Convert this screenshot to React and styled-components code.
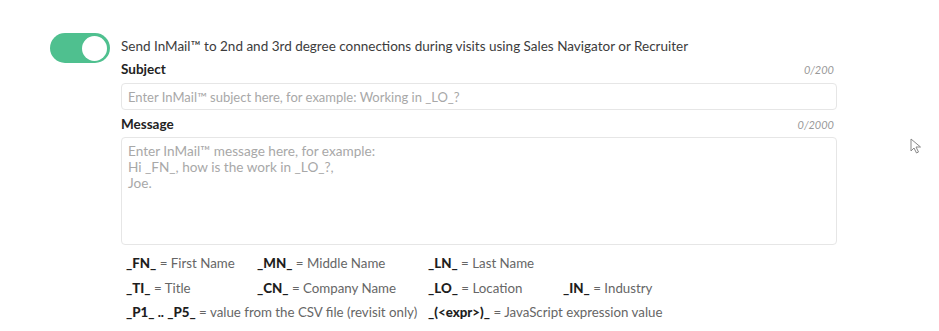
import React from "react";
import styled, { createGlobalStyle } from "styled-components";

const Global = createGlobalStyle`
  html, body { margin: 0; padding: 0; background: #ffffff; }
  body { font-family: "Lato", "Noto Sans", sans-serif; }
`;

const Page = styled.div`
  position: relative;
  width: 939px;
  height: 331px;
  overflow: hidden;
  box-sizing: border-box;
  padding: 33px 0 0 50px;
  display: flex;
  gap: 11px;
  align-items: flex-start;
`;

const Toggle = styled.div`
  flex: none;
  width: 60px;
  height: 30px;
  border-radius: 15px;
  background: ${(p) => (p.$on ? "#4fc08f" : "#cfcfcf")};
  display: flex;
  align-items: center;
  justify-content: ${(p) => (p.$on ? "flex-end" : "flex-start")};
  padding: 0 3px;
  box-sizing: border-box;
`;

const Knob = styled.div`
  width: 25px;
  height: 25px;
  border-radius: 50%;
  background: #ffffff;
`;

const Content = styled.div`
  width: 716px;
  padding-top: 4px;
  display: flex;
  flex-direction: column;
`;

const Intro = styled.div`
  font-size: 13.5px;
  line-height: 18px;
  color: #3c3c3c;
  white-space: nowrap;
`;

const FieldHead = styled.div`
  display: flex;
  justify-content: space-between;
  align-items: baseline;
  height: 20px;
  margin-top: ${(p) => p.$mt}px;
  margin-bottom: ${(p) => p.$mb}px;
  padding-right: 3px;
`;

const Label = styled.span`
  font-size: 13.5px;
  font-weight: 700;
  color: #222;
  line-height: 20px;
`;

const Counter = styled.span`
  font-size: 11px;
  font-style: italic;
  color: #999;
`;

const Input = styled.input`
  box-sizing: border-box;
  width: 716px;
  height: 27px;
  border: 1px solid #e6e6e6;
  border-radius: 4px;
  padding: 0 6px;
  font-family: inherit;
  font-size: 13px;
  color: #333;
  outline: none;
  &::placeholder { color: #a8a8a8; }
`;

const TextArea = styled.textarea`
  box-sizing: border-box;
  width: 716px;
  height: 108px;
  border: 1px solid #e6e6e6;
  border-radius: 4px;
  padding: 5px 6px;
  font-family: inherit;
  font-size: 13.6px;
  line-height: 16px;
  color: #333;
  resize: none;
  outline: none;
  &::placeholder { color: #a8a8a8; }
`;

const Legend = styled.div`
  margin-top: 6px;
  padding-left: 5px;
  display: grid;
  grid-template-columns: 131px 171px 135px auto;
  grid-auto-rows: 24.5px;
  align-items: center;
  font-size: 13.3px;
  white-space: nowrap;
`;

const Item = styled.div`
  grid-column: ${(p) => (p.$span ? `span ${p.$span}` : "auto")};
  color: #666;
`;

const Key = styled.b`
  color: #1e1e1e;
  font-weight: 900;
`;

const Cursor = styled.svg`
  position: absolute;
  left: 910px;
  top: 138px;
`;

const legend = [
  [["_FN_", "First Name"], ["_MN_", "Middle Name"], ["_LN_", "Last Name"], null],
  [["_TI_", "Title"], ["_CN_", "Company Name"], ["_LO_", "Location"], ["_IN_", "Industry"]],
];

export default function App() {
  return (
    <>
      <Global />
      <Page>
        <Toggle $on>
          <Knob />
        </Toggle>
        <Content>
          <Intro>
            Send InMail™ to 2nd and 3rd degree connections during visits using Sales Navigator or Recruiter
          </Intro>
          <FieldHead $mt={4} $mb={4}>
            <Label>Subject</Label>
            <Counter>0/200</Counter>
          </FieldHead>
          <Input placeholder="Enter InMail™ subject here, for example: Working in _LO_?" />
          <FieldHead $mt={4} $mb={3}>
            <Label>Message</Label>
            <Counter>0/2000</Counter>
          </FieldHead>
          <TextArea placeholder={"Enter InMail™ message here, for example:\nHi _FN_, how is the work in _LO_?,\nJoe."} />
          <Legend>
            {legend.map((row, ri) =>
              row.map((it, i) =>
                it ? (
                  <Item key={`${ri}-${i}`}>
                    <Key>{it[0]}</Key> = {it[1]}
                  </Item>
                ) : (
                  <Item key={`${ri}-${i}`} />
                )
              )
            )}
            <Item $span={2}>
              <Key>_P1_ .. _P5_</Key> = value from the CSV file (revisit only)
            </Item>
            <Item $span={2}>
              <Key>_(&lt;expr&gt;)_</Key> = JavaScript expression value
            </Item>
          </Legend>
        </Content>
        <Cursor width="12" height="16" viewBox="0 0 12 16">
          <path d="M1 1 L1 13 L4 10 L6.5 15 L8.5 14 L6 9 L10.5 9 Z" fill="#fff" stroke="#888" strokeWidth="1" strokeLinejoin="round" />
        </Cursor>
      </Page>
    </>
  );
}
